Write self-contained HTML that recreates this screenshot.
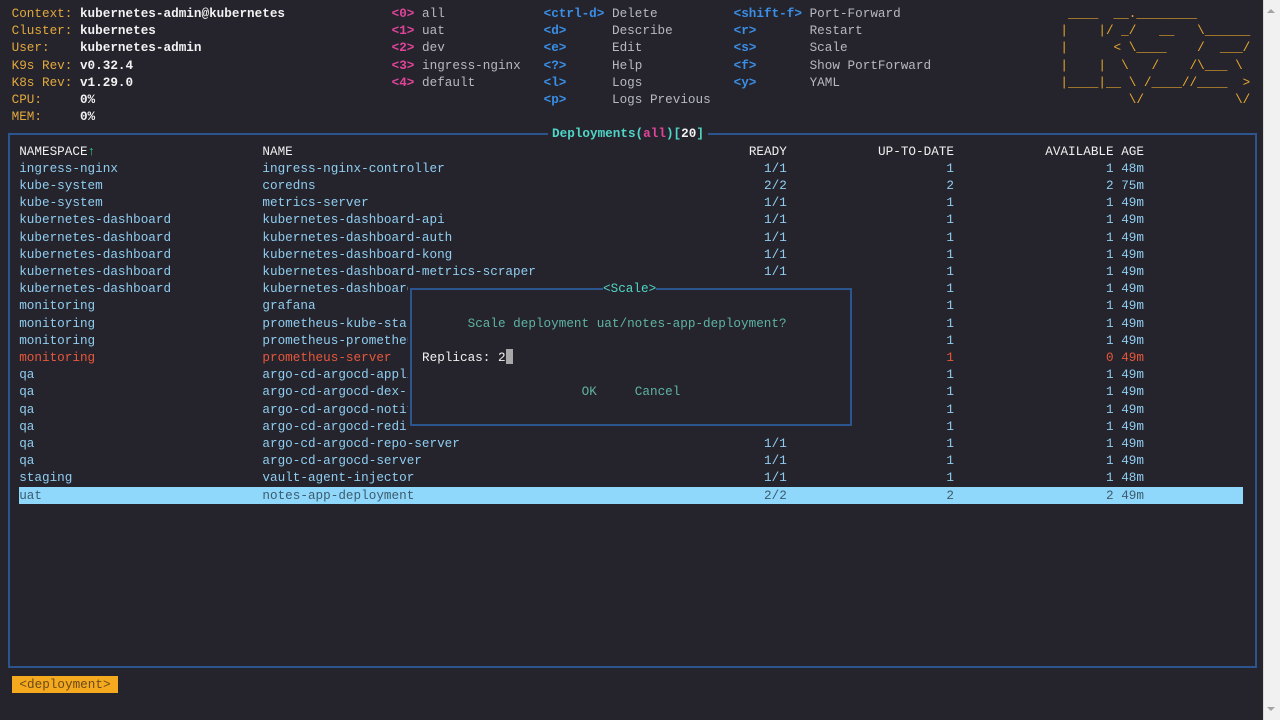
<!DOCTYPE html>
<html><head><meta charset="utf-8"><style>
html,body{margin:0;padding:0;}
body{width:1280px;height:720px;background:#25242d;position:relative;overflow:hidden;font-family:"Liberation Mono",monospace;font-size:12.667px;line-height:17.2px;color:#dcdcdc;}
.a{position:absolute;white-space:pre;}
.o{color:#e2a83c}.w{color:#f2f2f2;font-weight:bold}
.m{color:#e0449a;font-weight:bold}.b{color:#3a8ee6;font-weight:bold}.g{color:#b8b8c0}
.row{position:absolute;left:0;width:1262px;height:17.2px;color:#8fcdf0}
.row span{position:absolute;white-space:pre;top:0}
.ns{left:19.2px}.nm{left:262.4px}.rd{right:475.2px}.ut{right:308px}.av{right:148.4px}.ag{left:1121.2px}
.hd{color:#f0f0f0}
.red{color:#e8573a}
.sel{background:#8fd8fb;color:#3d5c6e}
</style></head><body>
<div class="a" style="left:11.6px;top:5px"><span class="o">Context: </span><span class="w">kubernetes-admin@kubernetes</span>
<span class="o">Cluster: </span><span class="w">kubernetes</span>
<span class="o">User:    </span><span class="w">kubernetes-admin</span>
<span class="o">K9s Rev: </span><span class="w">v0.32.4</span>
<span class="o">K8s Rev: </span><span class="w">v1.29.0</span>
<span class="o">CPU:     </span><span class="w">0%</span>
<span class="o">MEM:     </span><span class="w">0%</span></div>
<div class="a" style="left:391.6px;top:5px"><span class="m">&lt;0&gt;</span> <span class="g">all</span>
<span class="m">&lt;1&gt;</span> <span class="g">uat</span>
<span class="m">&lt;2&gt;</span> <span class="g">dev</span>
<span class="m">&lt;3&gt;</span> <span class="g">ingress-nginx</span>
<span class="m">&lt;4&gt;</span> <span class="g">default</span></div>
<div class="a" style="left:543.6px;top:5px"><span class="b">&lt;ctrl-d&gt;</span> <span class="g">Delete</span>
<span class="b">&lt;d&gt;</span>      <span class="g">Describe</span>
<span class="b">&lt;e&gt;</span>      <span class="g">Edit</span>
<span class="b">&lt;?&gt;</span>      <span class="g">Help</span>
<span class="b">&lt;l&gt;</span>      <span class="g">Logs</span>
<span class="b">&lt;p&gt;</span>      <span class="g">Logs Previous</span></div>
<div class="a" style="left:733.6px;top:5px"><span class="b">&lt;shift-f&gt;</span> <span class="g">Port-Forward</span>
<span class="b">&lt;r&gt;</span>       <span class="g">Restart</span>
<span class="b">&lt;s&gt;</span>       <span class="g">Scale</span>
<span class="b">&lt;f&gt;</span>       <span class="g">Show PortForward</span>
<span class="b">&lt;y&gt;</span>       <span class="g">YAML</span></div>
<div class="a" style="left:1060.4px;top:5px;color:#e7a72e"> ____  __.________       
|    |/ _/   __   \______
|      &lt; \____    /  ___/
|    |  \   /    /\___ \ 
|____|__ \ /____//____  &gt;
         \/            \/</div>

<div style="position:absolute;left:8px;top:133px;width:1245px;height:531px;border:2px solid #2c5590"></div>
<div class="a" style="left:548px;top:125.4px;background:#25242d;padding:0 4px"><span style="color:#4fd6c6;font-weight:bold">Deployments(</span><span style="color:#e0449a;font-weight:bold">all</span><span style="color:#4fd6c6;font-weight:bold">)[</span><span class="w">20</span><span style="color:#4fd6c6;font-weight:bold">]</span></div>

<div class="row hd" style="top:142.6px"><span class="ns">NAMESPACE<span style="position:static;color:#2fd08a">↑</span></span><span class="nm">NAME</span><span class="rd">READY</span><span class="ut">UP-TO-DATE</span><span class="av">AVAILABLE</span><span class="ag">AGE</span></div>
<div class="row" style="top:159.8px"><span class="ns">ingress-nginx</span><span class="nm">ingress-nginx-controller</span><span class="rd">1/1</span><span class="ut">1</span><span class="av">1</span><span class="ag">48m</span></div>
<div class="row" style="top:177px"><span class="ns">kube-system</span><span class="nm">coredns</span><span class="rd">2/2</span><span class="ut">2</span><span class="av">2</span><span class="ag">75m</span></div>
<div class="row" style="top:194.2px"><span class="ns">kube-system</span><span class="nm">metrics-server</span><span class="rd">1/1</span><span class="ut">1</span><span class="av">1</span><span class="ag">49m</span></div>
<div class="row" style="top:211.4px"><span class="ns">kubernetes-dashboard</span><span class="nm">kubernetes-dashboard-api</span><span class="rd">1/1</span><span class="ut">1</span><span class="av">1</span><span class="ag">49m</span></div>
<div class="row" style="top:228.6px"><span class="ns">kubernetes-dashboard</span><span class="nm">kubernetes-dashboard-auth</span><span class="rd">1/1</span><span class="ut">1</span><span class="av">1</span><span class="ag">49m</span></div>
<div class="row" style="top:245.8px"><span class="ns">kubernetes-dashboard</span><span class="nm">kubernetes-dashboard-kong</span><span class="rd">1/1</span><span class="ut">1</span><span class="av">1</span><span class="ag">49m</span></div>
<div class="row" style="top:263px"><span class="ns">kubernetes-dashboard</span><span class="nm">kubernetes-dashboard-metrics-scraper</span><span class="rd">1/1</span><span class="ut">1</span><span class="av">1</span><span class="ag">49m</span></div>
<div class="row" style="top:280.2px"><span class="ns">kubernetes-dashboard</span><span class="nm">kubernetes-dashboard-web</span><span class="rd">1/1</span><span class="ut">1</span><span class="av">1</span><span class="ag">49m</span></div>
<div class="row" style="top:297.4px"><span class="ns">monitoring</span><span class="nm">grafana</span><span class="rd">1/1</span><span class="ut">1</span><span class="av">1</span><span class="ag">49m</span></div>
<div class="row" style="top:314.6px"><span class="ns">monitoring</span><span class="nm">prometheus-kube-state-metrics</span><span class="rd">1/1</span><span class="ut">1</span><span class="av">1</span><span class="ag">49m</span></div>
<div class="row" style="top:331.8px"><span class="ns">monitoring</span><span class="nm">prometheus-prometheus-operator</span><span class="rd">1/1</span><span class="ut">1</span><span class="av">1</span><span class="ag">49m</span></div>
<div class="row red" style="top:349px"><span class="ns">monitoring</span><span class="nm">prometheus-server</span><span class="rd">0/1</span><span class="ut">1</span><span class="av">0</span><span class="ag">49m</span></div>
<div class="row" style="top:366.2px"><span class="ns">qa</span><span class="nm">argo-cd-argocd-applicationset</span><span class="rd">1/1</span><span class="ut">1</span><span class="av">1</span><span class="ag">49m</span></div>
<div class="row" style="top:383.4px"><span class="ns">qa</span><span class="nm">argo-cd-argocd-dex-server</span><span class="rd">1/1</span><span class="ut">1</span><span class="av">1</span><span class="ag">49m</span></div>
<div class="row" style="top:400.6px"><span class="ns">qa</span><span class="nm">argo-cd-argocd-notifications</span><span class="rd">1/1</span><span class="ut">1</span><span class="av">1</span><span class="ag">49m</span></div>
<div class="row" style="top:417.8px"><span class="ns">qa</span><span class="nm">argo-cd-argocd-redis</span><span class="rd">1/1</span><span class="ut">1</span><span class="av">1</span><span class="ag">49m</span></div>
<div class="row" style="top:435px"><span class="ns">qa</span><span class="nm">argo-cd-argocd-repo-server</span><span class="rd">1/1</span><span class="ut">1</span><span class="av">1</span><span class="ag">49m</span></div>
<div class="row" style="top:452.2px"><span class="ns">qa</span><span class="nm">argo-cd-argocd-server</span><span class="rd">1/1</span><span class="ut">1</span><span class="av">1</span><span class="ag">49m</span></div>
<div class="row" style="top:469.4px"><span class="ns">staging</span><span class="nm">vault-agent-injector</span><span class="rd">1/1</span><span class="ut">1</span><span class="av">1</span><span class="ag">48m</span></div>
<div class="row" style="top:486.6px;color:#3d5c6e"><div class="sel" style="position:absolute;left:19.2px;width:1224px;height:17.2px"></div><span class="ns">uat</span><span class="nm">notes-app-deployment</span><span class="rd">2/2</span><span class="ut">2</span><span class="av">2</span><span class="ag">49m</span></div>

<div style="position:absolute;left:407.6px;top:280.2px;width:448px;height:154.8px;background:#25242d"></div>
<div style="position:absolute;left:410px;top:288px;width:438px;height:134px;border:2px solid #2c5590"></div>
<div class="a" style="left:603px;top:280.2px;background:#25242d;color:#4fd6c6">&lt;Scale&gt;</div>
<div class="a" style="left:467.6px;top:314.6px;color:#5fb3a3">Scale deployment uat/notes-app-deployment?</div>
<div class="a" style="left:422px;top:349px;color:#f0f0f0">Replicas: 2<span style="display:inline-block;width:7px;height:15px;background:#a8a8a8;vertical-align:-3px"></span></div>
<div class="a" style="left:581.6px;top:383.4px;color:#5fb3a3">OK</div>
<div class="a" style="left:634.8px;top:383.4px;color:#5fb3a3">Cancel</div>

<div class="a" style="left:12px;top:676px;width:106px;height:17px;background:#f5a91f;color:#6b4a18;text-align:center;line-height:17px">&lt;deployment&gt;</div>

<div style="position:absolute;left:1263px;top:0;width:17px;height:720px;background:#f1f1f1;border-left:1px solid #dcdcdc"></div>
<div style="position:absolute;left:1267px;top:9px;width:0;height:0;border-left:4px solid transparent;border-right:4px solid transparent;border-bottom:4px solid #a3a3a3"></div>
<div style="position:absolute;left:1267px;top:707px;width:0;height:0;border-left:4px solid transparent;border-right:4px solid transparent;border-top:4px solid #a3a3a3"></div>
</body></html>
